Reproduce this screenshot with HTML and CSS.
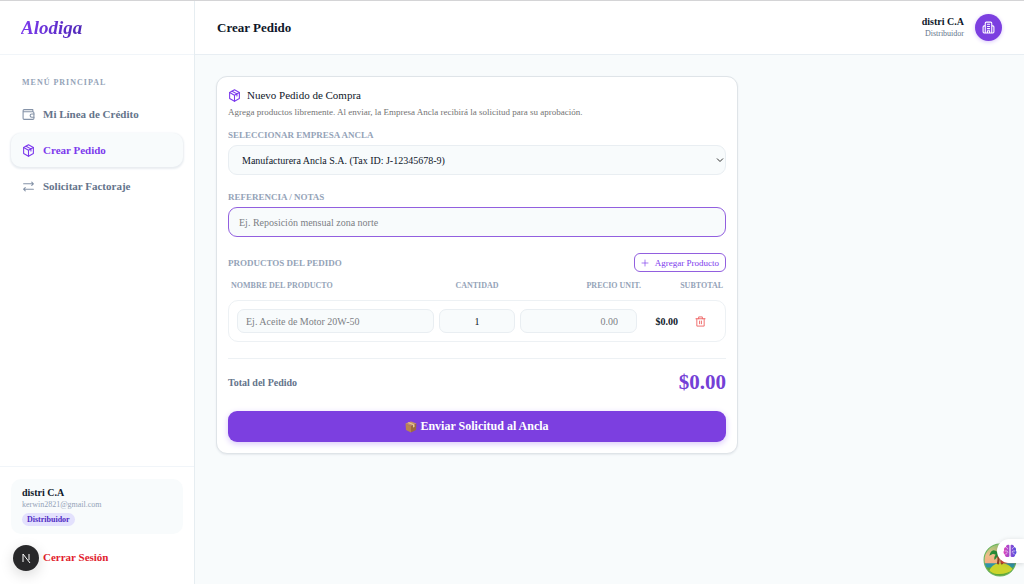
FILE: index.html
```html
<!DOCTYPE html>
<html lang="es">
<head>
  <meta charset="UTF-8">
  <meta name="viewport" content="width=device-width, initial-scale=1.0">
  <title>Alodiga - Crear Pedido</title>
  <link rel="stylesheet" href="styles.css">
</head>
<body>
  <aside class="sidebar">
    <div class="brand"><a href="#" class="logo">Alodiga</a></div>

    <nav class="menu">
      <p class="menu-title">Menú Principal</p>
      <a href="#" class="menu-item">
        <svg class="icon" viewBox="0 0 24 24"><path d="M20 7V3H4a2 2 0 0 0-2 2v14a2 2 0 0 0 2 2h16a2 2 0 0 0 2-2V9a2 2 0 0 0-2-2H2"/><path d="M22 11h-4a3 3 0 0 0 0 6h4"/></svg>
        Mi Línea de Crédito
      </a>
      <a href="#" class="menu-item active">
        <svg class="icon" viewBox="0 0 24 24"><path d="M12 1.500 21 6.500v11L12 22.500 3 17.500v-11z"/><path d="M3 6.500l9 5 9-5M12 11.500v11M7.500 4l9 5v4"/></svg>
        Crear Pedido
      </a>
      <a href="#" class="menu-item">
        <svg class="icon" viewBox="0 0 24 24"><path d="M3 7h18M18 4l3 3-3 3M21 17H3M6 14l-3 3 3 3"/></svg>
        Solicitar Factoraje
      </a>
    </nav>

    <div class="sidebar-footer">
      <div class="user-card">
        <strong class="user-name">distri C.A</strong>
        <span class="user-email">kerwin2821@gmail.com</span>
        <span class="role">Distribuidor</span>
      </div>
      <button type="button" class="logout">Cerrar Sesión</button>
    </div>
  </aside>

  <div class="page">
    <header class="topbar">
      <h1>Crear Pedido</h1>
      <div class="account">
        <div class="account-text">
          <strong>distri C.A</strong>
          <span>Distribuidor</span>
        </div>
        <div class="avatar">
          <svg class="icon" viewBox="0 0 24 24"><path d="M6 22V4a2 2 0 0 1 2-2h8a2 2 0 0 1 2 2v18M6 9H4a2 2 0 0 0-2 2v9a2 2 0 0 0 2 2h16a2 2 0 0 0 2-2v-9a2 2 0 0 0-2-2h-2M10 6h4M10 10h4M10 14h4M10 22v-4h4v4"/></svg>
        </div>
      </div>
    </header>

    <main>
      <form class="card">
        <h2>
          <svg class="icon" viewBox="0 0 24 24"><path d="M12 1.500 21 6.500v11L12 22.500 3 17.500v-11z"/><path d="M3 6.500l9 5 9-5M12 11.500v11M7.500 4l9 5v4"/></svg>
          Nuevo Pedido de Compra
        </h2>
        <p class="description">Agrega productos libremente. Al enviar, la Empresa Ancla recibirá la solicitud para su aprobación.</p>

        <div class="field">
          <label class="label" for="empresa">Seleccionar Empresa Ancla</label>
          <div class="select-wrap">
            <select id="empresa" class="control">
              <option>Manufacturera Ancla S.A. (Tax ID: J-12345678-9)</option>
            </select>
            <svg class="chevron" viewBox="0 0 8 8"><path d="M1 2.500l3 3 3-3"/></svg>
          </div>
        </div>

        <div class="field">
          <label class="label" for="referencia">Referencia / Notas</label>
          <input id="referencia" class="control focused" type="text" placeholder="Ej. Reposición mensual zona norte">
        </div>

        <div class="products-head">
          <span class="label">Productos del Pedido</span>
          <button type="button" class="btn-add">
            <svg class="icon" viewBox="0 0 24 24"><path d="M3 12h18M12 3v18"/></svg>
            Agregar Producto
          </button>
        </div>

        <div class="columns">
          <label for="producto">Nombre del Producto</label>
          <label for="cantidad" class="center">Cantidad</label>
          <label for="precio" class="right">Precio Unit.</label>
          <span class="right">Subtotal</span>
        </div>

        <div class="product">
          <input id="producto" type="text" placeholder="Ej. Aceite de Motor 20W-50">
          <input id="cantidad" class="center" type="text" inputmode="numeric" value="1">
          <input id="precio" class="price" type="text" inputmode="decimal" placeholder="0.00">
          <strong class="right">$0.00</strong>
          <button type="button" class="btn-delete" aria-label="Eliminar producto">
            <svg class="icon" viewBox="0 0 24 24"><path d="M2 6h20M20 6v16H4V6M8 6V2h8v4M10 11v6M14 11v6"/></svg>
          </button>
        </div>

        <div class="total">
          <span>Total del Pedido</span>
          <strong>$0.00</strong>
        </div>

        <button type="submit" class="btn-submit">
          <svg class="box" viewBox="0 0 24 24">
            <path fill="#c69463" d="M12 1l11 4-11 5L1 5z"/>
            <path fill="#b98451" d="M1 5l11 5v13L2 18z"/>
            <path fill="#9c6a40" d="M23 5l-11 5v13l10-5z"/>
            <path fill="#e6c79a" d="M5 3.500l3-1 11 4.500v5l-3 1V8z"/>
          </svg>
          Enviar Solicitud al Ancla
        </button>
      </form>
    </main>
  </div>

  <!-- floating widgets -->
  <div class="dev-badge">
    <svg viewBox="0 0 26 26"><path d="M10 17V9l7 9M16 9v6"/></svg>
  </div>

  <div class="assistant">
    <svg class="island" viewBox="0 0 32 32">
      <defs>
        <clipPath id="round"><circle cx="16" cy="16" r="15"/></clipPath>
        <linearGradient id="sky" x2="0" y2="1">
          <stop offset="0" stop-color="#8cc870"/>
          <stop offset=".35" stop-color="#eebd8b"/>
          <stop offset=".6" stop-color="#f5ad80"/>
        </linearGradient>
      </defs>
      <g clip-path="url(#round)">
        <path fill="url(#sky)" d="M0 0h32v32H0z"/>
        <path fill="#2f94a5" d="M0 19h32v5H0z"/>
        <path fill="#5fa73a" d="M0 23h32v9H0z"/>
        <path fill="#cbd42c" d="M6 26c3-9 17-10 22-1-5 5-17 6-22 1z"/>
        <path fill="none" stroke="#8f4328" stroke-width="2" d="M14 20c1-3 1-6 0-9M18 20c-1-3-1-5 1-8"/>
        <path fill="#278b35" d="M14 9c-4-4-7-2-8 3 3-2 4-2 6-1-1 1-2 3-1 5 2-2 2-3 3-4 2 1 3 2 3 4 1-3 0-5-2-6 3-1 4 0 6 2 0-4-3-6-6-3 0-2 1-3 3-4-3-1-5 1-4 4z"/>
        <path fill="#cf4631" d="M17 15c2-4 5-3 6 4h-6z"/>
      </g>
      <circle cx="16" cy="16" r="15" fill="none" stroke="#6cb45d" stroke-width="1"/>
    </svg>
    <div class="brain-tab">
      <svg class="brain" viewBox="0 0 24 24">
        <defs>
          <linearGradient id="mind"><stop stop-color="#e044bd"/><stop offset="1" stop-color="#4d4fe0"/></linearGradient>
        </defs>
        <path fill="url(#mind)" d="M11 2C8 0 5 2 5 5c-3 0-4 4-3 6-2 2-1 6 1 7 0 4 5 6 8 3zM13 2c3-2 6 0 6 3 3 0 4 4 3 6 2 2 1 6-1 7 0 4-5 6-8 3z"/>
        <path fill="none" stroke="#fff" stroke-width="1" d="M5 6c2 0 3 1 3 3M3 12h4l2 2M5 18c0-2 1-3 3-3M19 6c-2 0-3 1-3 3M21 12h-4l-2 2M19 18c0-2-1-3-3-3"/>
      </svg>
    </div>
  </div>
</body>
</html>
```
FILE: styles.css
```css
* {
  box-sizing: border-box;
}

body {
  margin: 0;
  display: flex;
  min-height: 100vh;
  border-top: 1px solid #d4d4d6;
  background: #f8fbfc;
  color: #0f172a;
  font-family: "Liberation Serif", "Times New Roman", serif;
  font-size: 11px;
}

h1, h2, p {
  margin: 0;
}

a {
  text-decoration: none;
}

button, input, select {
  font-family: inherit;
}

button {
  cursor: pointer;
}

.icon {
  width: 13px;
  height: 13px;
  flex-shrink: 0;
  fill: none;
  stroke: currentColor;
  stroke-width: 2;
  stroke-linecap: round;
  stroke-linejoin: round;
}

/* Sidebar */
.sidebar {
  width: 195px;
  flex-shrink: 0;
  display: flex;
  flex-direction: column;
  background: #fff;
  border-right: 1px solid #e6edf1;
}

.brand {
  height: 54px;
  padding: 0 21px;
  display: flex;
  align-items: center;
  border-bottom: 1px solid #f1f5f9;
}

.logo {
  font-size: 19px;
  font-weight: bold;
  font-style: italic;
  color: transparent;
  background: linear-gradient(to right, #7c3aed, #4f28b8);
  background-clip: text;
}

.menu {
  flex: 1;
  padding: 22px 11px;
}

.menu-title {
  padding: 0 11px;
  margin-bottom: 9px;
  font-size: 8px;
  line-height: 11px;
  font-weight: bold;
  letter-spacing: 1px;
  text-transform: uppercase;
  color: #94a3b8;
}

.menu-item {
  display: flex;
  align-items: center;
  gap: 8px;
  height: 34px;
  margin-bottom: 2px;
  padding: 0 11px;
  border-radius: 10px;
  font-size: 11px;
  font-weight: bold;
  color: #64748b;
}

.menu-item .icon {
  color: #8593a8;
}

.menu-item.active {
  background: #f8fbfc;
  color: #7c3aed;
  box-shadow: 0 1px 2px 1px #e9edf1;
}

.menu-item.active .icon {
  color: #7c3aed;
}

.sidebar-footer {
  padding: 12px 11px 11px;
  border-top: 1px solid #f1f5f9;
}

.user-card {
  display: flex;
  flex-direction: column;
  align-items: flex-start;
  padding: 8px 11px;
  border-radius: 10px;
  background: #f8fbfc;
}

.user-name {
  font-size: 10px;
  line-height: 12px;
}

.user-email {
  font-size: 8px;
  line-height: 12px;
  color: #94a3b8;
}

.role {
  margin-top: 2px;
  padding: 0 5px;
  border-radius: 8px;
  font-size: 8px;
  line-height: 13px;
  font-weight: bold;
  color: #4f2bc4;
  background: #e3e1fd;
}

.logout {
  display: block;
  width: 100%;
  margin-top: 8px;
  margin-bottom: 1px;
  padding: 0 32px;
  border: none;
  background: none;
  font-size: 11px;
  line-height: 30px;
  font-weight: bold;
  text-align: left;
  color: #e11d2e;
}

/* Top bar */
.page {
  flex: 1;
  min-width: 0;
}

.topbar {
  height: 54px;
  padding: 0 22px;
  display: flex;
  align-items: center;
  justify-content: space-between;
  background: #fff;
  border-bottom: 1px solid #e8eef3;
}

h1 {
  font-size: 13px;
}

.account {
  display: flex;
  align-items: center;
  gap: 11px;
}

.account-text {
  display: flex;
  flex-direction: column;
  text-align: right;
  font-size: 10px;
  line-height: 12px;
}

.account-text span {
  font-size: 8px;
  color: #64748b;
}

.avatar {
  width: 27px;
  height: 27px;
  display: flex;
  align-items: center;
  justify-content: center;
  border-radius: 50%;
  background: #7c3fe0;
  color: #fff;
  box-shadow: 0 1px 4px #d9c8fa;
}

/* Order form */
main {
  padding: 21px;
}

.card {
  max-width: 522px;
  padding: 11px;
  border: 1px solid #dfe4e8;
  border-radius: 11px;
  background: #fff;
  box-shadow: 0 1px 2px #e6eaee;
}

h2 {
  display: flex;
  align-items: center;
  gap: 6px;
  font-size: 11px;
  line-height: 14px;
  font-weight: normal;
}

h2 .icon {
  color: #7c3aed;
}

.description {
  margin-top: 3px;
  margin-bottom: 10px;
  font-size: 9px;
  line-height: 14px;
  color: #737373;
}

.label,
.columns {
  font-size: 9px;
  line-height: 12px;
  font-weight: bold;
  text-transform: uppercase;
  color: #94a3b8;
}

.field {
  margin-bottom: 16px;
}

.field .label {
  display: block;
  margin-bottom: 4px;
}

.control {
  display: block;
  width: 100%;
  height: 30px;
  padding: 0 10px;
  border: 1px solid #e9eef2;
  border-radius: 9px;
  outline: none;
  background: #f8fbfc;
  color: #0f172a;
  font-size: 10px;
}

select.control {
  padding: 0 13px;
  appearance: none;
}

.focused {
  border-color: #925fdf;
}

::placeholder {
  color: #7c7f85;
  opacity: 1;
}

.select-wrap {
  position: relative;
}

.chevron {
  position: absolute;
  top: 11px;
  right: 2px;
  width: 8px;
  height: 8px;
  fill: none;
  stroke: #333;
  pointer-events: none;
}

.products-head {
  display: flex;
  align-items: center;
  justify-content: space-between;
}

.btn-add {
  display: flex;
  align-items: center;
  gap: 6px;
  height: 19px;
  padding: 0 6px;
  border: 1px solid #925fdf;
  border-radius: 6px;
  background: #fff;
  color: #7c3aed;
  font-size: 9px;
}

.btn-add .icon {
  width: 8px;
  height: 8px;
}

.columns {
  display: grid;
  grid-template-columns: 5fr 2fr 3fr 2fr;
  margin: 8px 3px;
  font-size: 8px;
}

.center {
  text-align: center;
}

.right {
  text-align: right;
}

.product {
  display: grid;
  grid-template-columns: 1fr 76px 117px 36px 34px;
  align-items: center;
  gap: 5px;
  padding: 8px;
  border: 1px solid #edf1f4;
  border-radius: 10px;
}

.product input {
  width: 100%;
  height: 24px;
  padding: 0 8px;
  border: 1px solid #e9eef2;
  border-radius: 7px;
  background: #f8fbfc;
  color: #0f172a;
  font-size: 10px;
}

.product .price {
  padding-right: 18px;
  text-align: right;
}

.product strong {
  font-size: 10px;
}

.btn-delete {
  display: flex;
  justify-self: center;
  padding: 0;
  border: none;
  background: none;
  color: #ef6464;
}

.btn-delete .icon {
  width: 11px;
  height: 11px;
}

.total {
  display: flex;
  align-items: center;
  justify-content: space-between;
  margin-top: 16px;
  padding: 12px 0 17px;
  border-top: 1px solid #edf1f4;
  font-size: 10px;
  font-weight: bold;
  color: #64748b;
}

.total strong {
  font-size: 21px;
  line-height: 23px;
  color: #7440d6;
}

.btn-submit {
  display: flex;
  align-items: center;
  justify-content: center;
  gap: 3px;
  width: 100%;
  height: 31px;
  border: none;
  border-radius: 9px;
  background: #7c3fe0;
  color: #fff;
  font-size: 12px;
  font-weight: bold;
  box-shadow: 0 2px 6px #d9c8fa;
}

.box {
  width: 12px;
  height: 12px;
}

/* Floating widgets */
.dev-badge {
  position: fixed;
  left: 13px;
  bottom: 13px;
  width: 26px;
  height: 26px;
  border-radius: 50%;
  background: #28282a;
  box-shadow: 0 4px 14px rgba(0, 0, 0, 0.15);
}

.dev-badge svg {
  display: block;
  fill: none;
  stroke: #fff;
  stroke-width: 1;
}

.assistant {
  position: fixed;
  right: 0;
  bottom: 7px;
  width: 41px;
  height: 38px;
}

.island {
  position: absolute;
  left: 0;
  bottom: 0;
  width: 34px;
  height: 34px;
}

.brain-tab {
  position: absolute;
  top: 0;
  right: 0;
  width: 27px;
  height: 24px;
  padding: 5px 6px;
  border-radius: 12px 0 0 12px;
  background: #fff;
  box-shadow: 0 1px 5px rgba(0, 0, 0, 0.15);
}

.brain {
  display: block;
  width: 14px;
  height: 14px;
}
```
